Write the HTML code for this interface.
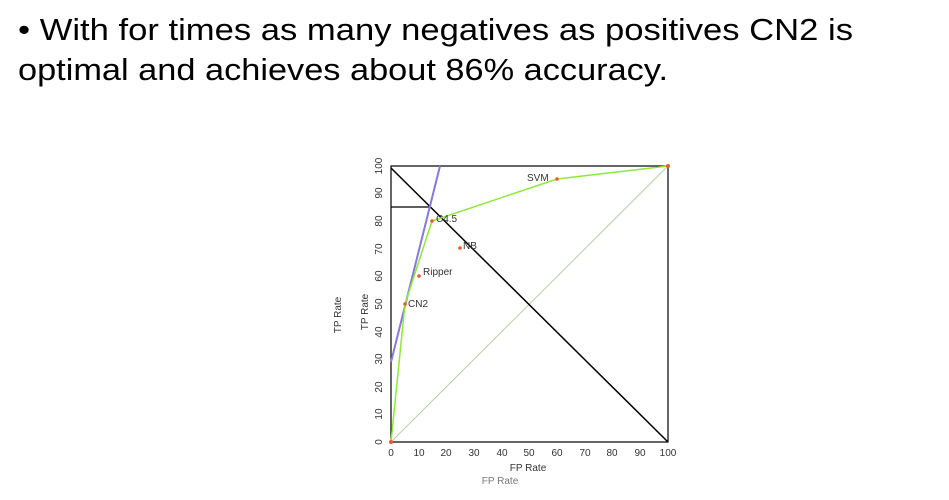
<!DOCTYPE html>
<html><head><style>
html,body{margin:0;padding:0;background:#fff;width:949px;height:500px;overflow:hidden}
</style></head><body>
<svg width="949" height="500" xmlns="http://www.w3.org/2000/svg" font-family="Liberation Sans, sans-serif">
<text x="18" y="40" font-size="31" fill="#000" textLength="835" lengthAdjust="spacingAndGlyphs">• With for times as many negatives as positives CN2 is</text>
<text x="18" y="80" font-size="31" fill="#000" textLength="650" lengthAdjust="spacingAndGlyphs">optimal and achieves about 86% accuracy.</text>

<rect x="391" y="166" width="277" height="276" fill="none" stroke="#000" stroke-width="1.2"/>
<line x1="391" y1="442" x2="668" y2="166" stroke="#b8cfa8" stroke-width="1"/>
<line x1="391" y1="168" x2="668" y2="442" stroke="#000" stroke-width="1.5"/>
<line x1="391" y1="207" x2="430" y2="207" stroke="#000" stroke-width="1.2"/>
<line x1="391" y1="362" x2="440" y2="166" stroke="#8878d8" stroke-width="2"/>
<polyline points="391,442 405,304 432,221 557,179 668,166" fill="none" stroke="#8ee83a" stroke-width="1.5"/>
<g fill="#f05a28">
<circle cx="391" cy="442" r="2"/><circle cx="405" cy="304" r="1.8"/><circle cx="419" cy="276" r="1.8"/>
<circle cx="432" cy="221" r="1.8"/><circle cx="460" cy="248" r="1.8"/><circle cx="557" cy="179" r="1.8"/><circle cx="668" cy="166" r="2"/>
</g>
<g font-size="10" fill="#333">
<text x="408" y="307">CN2</text>
<text x="423" y="275">Ripper</text>
<text x="436" y="222">C4.5</text>
<text x="463" y="249">NB</text>
<text x="527" y="181">SVM</text>
</g>
<g font-size="10" fill="#333" text-anchor="middle">
<text x="391" y="456">0</text><text x="419" y="456">10</text><text x="446" y="456">20</text><text x="474" y="456">30</text>
<text x="502" y="456">40</text><text x="529" y="456">50</text><text x="557" y="456">60</text><text x="585" y="456">70</text>
<text x="612" y="456">80</text><text x="640" y="456">90</text><text x="668" y="456">100</text>
<text x="528" y="471">FP Rate</text>
<text x="500" y="484" fill="#777">FP Rate</text>
</g>
<g font-size="10" fill="#333" text-anchor="middle">
<text transform="translate(382,442) rotate(-90)">0</text>
<text transform="translate(382,414) rotate(-90)">10</text>
<text transform="translate(382,387) rotate(-90)">20</text>
<text transform="translate(382,359) rotate(-90)">30</text>
<text transform="translate(382,332) rotate(-90)">40</text>
<text transform="translate(382,304) rotate(-90)">50</text>
<text transform="translate(382,276) rotate(-90)">60</text>
<text transform="translate(382,249) rotate(-90)">70</text>
<text transform="translate(382,221) rotate(-90)">80</text>
<text transform="translate(382,193) rotate(-90)">90</text>
<text transform="translate(382,166) rotate(-90)">100</text>
<text transform="translate(368,312) rotate(-90)">TP Rate</text>
<text transform="translate(341,315) rotate(-90)">TP Rate</text>
</g>
</svg>
</body></html>
